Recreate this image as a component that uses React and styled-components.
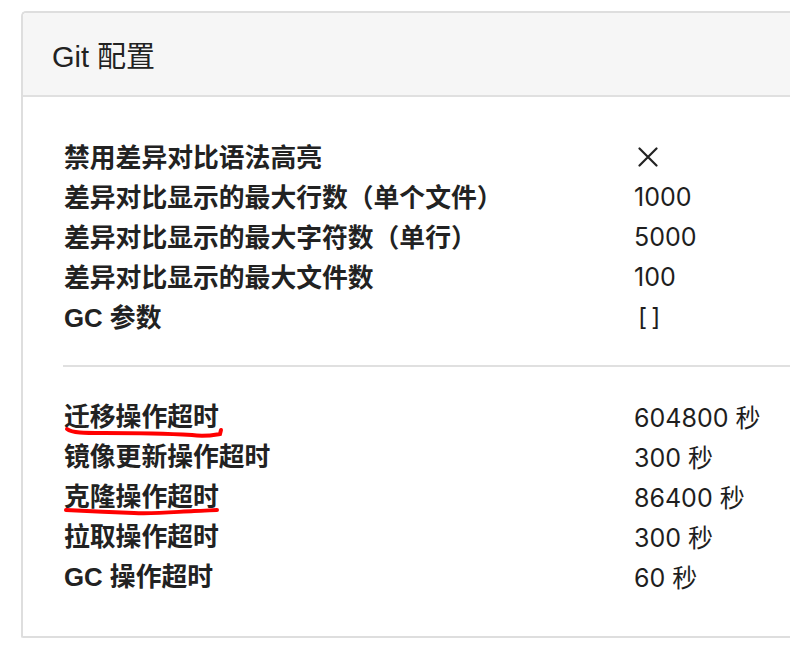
import React from "react";
import styled, { createGlobalStyle } from "styled-components";

const GlobalStyle = createGlobalStyle`
  html, body {
    margin: 0;
    padding: 0;
    background: #ffffff;
    overflow: hidden;
  }
  body {
    font-family: "Liberation Sans", "Noto Sans CJK SC", sans-serif;
    color: #222;
  }
`;

const groups = [
  [
    { label: "禁用差异对比语法高亮", value: "x" },
    { label: "差异对比显示的最大行数（单个文件）", value: "1000" },
    { label: "差异对比显示的最大字符数（单行）", value: "5000" },
    { label: "差异对比显示的最大文件数", value: "100" },
    { label: "GC 参数", value: "[\u2006]", inset: true },
  ],
  [
    { label: "迁移操作超时", value: "604800 秒", scribble: "a" },
    { label: "镜像更新操作超时", value: "300 秒" },
    { label: "克隆操作超时", value: "86400 秒", scribble: "b" },
    { label: "拉取操作超时", value: "300 秒" },
    { label: "GC 操作超时", value: "60 秒" },
  ],
];

export default function App() {
  return (
    <>
      <GlobalStyle />
      <Page>
        <Panel>
          <Header>
            <h3>Git 配置</h3>
          </Header>
          <Body>
            {groups.map((rows, gi) => (
              <React.Fragment key={gi}>
                {gi > 0 && <Divider />}
                <Table>
                  {rows.map((row) => (
                    <React.Fragment key={row.label}>
                      <Label>
                        {row.label}
                        {row.scribble && <Scribble kind={row.scribble} />}
                      </Label>
                      <Value $inset={row.inset}>
                        {row.value === "x" ? <CrossIcon /> : row.value}
                      </Value>
                    </React.Fragment>
                  ))}
                </Table>
              </React.Fragment>
            ))}
          </Body>
        </Panel>
      </Page>
    </>
  );
}

function CrossIcon() {
  return (
    <Cross width="20" height="20" viewBox="0 0 20 20">
      <path d="M1.5 1.5 L18.5 18.5 M18.5 1.5 L1.5 18.5" stroke="#222" strokeWidth="2.2" strokeLinecap="round" fill="none" />
    </Cross>
  );
}

function Scribble({ kind }) {
  const d =
    kind === "a"
      ? "M3 11 C8 15, 20 15, 40 15 C80 15, 110 16, 128 17 C140 19, 150 17, 156 16 L157 12"
      : "M2 12 C20 13, 50 14, 70 15 C90 16, 110 14, 130 13 C140 13, 148 12, 153 12";
  return (
    <Mark width="160" height="24" viewBox="0 0 160 24">
      <path d={d} stroke="#ff0000" strokeWidth="4" strokeLinecap="round" fill="none" />
    </Mark>
  );
}

const Page = styled.div`
  padding-top: 11px;
  padding-left: 21px;
`;

const Panel = styled.div`
  width: 820px;
  border: 2px solid #dedede;
  border-right: none;
  border-top-left-radius: 5px;
  border-bottom-left-radius: 2px;
  background: #fff;
`;

const Header = styled.div`
  height: 82px;
  display: flex;
  align-items: center;
  padding-left: 29px;
  background: #f6f6f6;
  border-bottom: 2px solid #e0e0e0;
  border-top-left-radius: 4px;
  h3 {
    margin: 0;
    font-family: "Liberation Sans", "Noto Sans CJK SC", sans-serif;
    font-weight: 400;
    font-size: 29px;
    color: #222;
  }
`;

const Body = styled.div`
  padding: 40px 0 40px 41px;
`;

const Table = styled.div`
  display: grid;
  grid-template-columns: 570px 1fr;
  grid-auto-rows: 40px;
  align-items: center;
`;

const Label = styled.div`
  position: relative;
  padding-bottom: 4px;
  font-family: "Liberation Sans", "Noto Sans CJK SC", sans-serif;
  font-weight: 700;
  font-size: 25.8px;
  color: #222;
  white-space: nowrap;
`;

const Value = styled.div`
  display: flex;
  align-items: center;
  padding-left: ${(p) => (p.$inset ? "4px" : "0")};
  font-family: Inter, "Noto Sans CJK SC", sans-serif;
  font-weight: 400;
  font-size: 25px;
  color: #1e1e1e;
  white-space: nowrap;
`;

const Cross = styled.svg`
  display: block;
  margin-left: 4px;
`;

const Divider = styled.div`
  height: 2px;
  margin: 28px 0 29px -1px;
  background: #e0e0e0;
`;

const Mark = styled.svg`
  position: absolute;
  left: 0;
  top: 22px;
  pointer-events: none;
`;
